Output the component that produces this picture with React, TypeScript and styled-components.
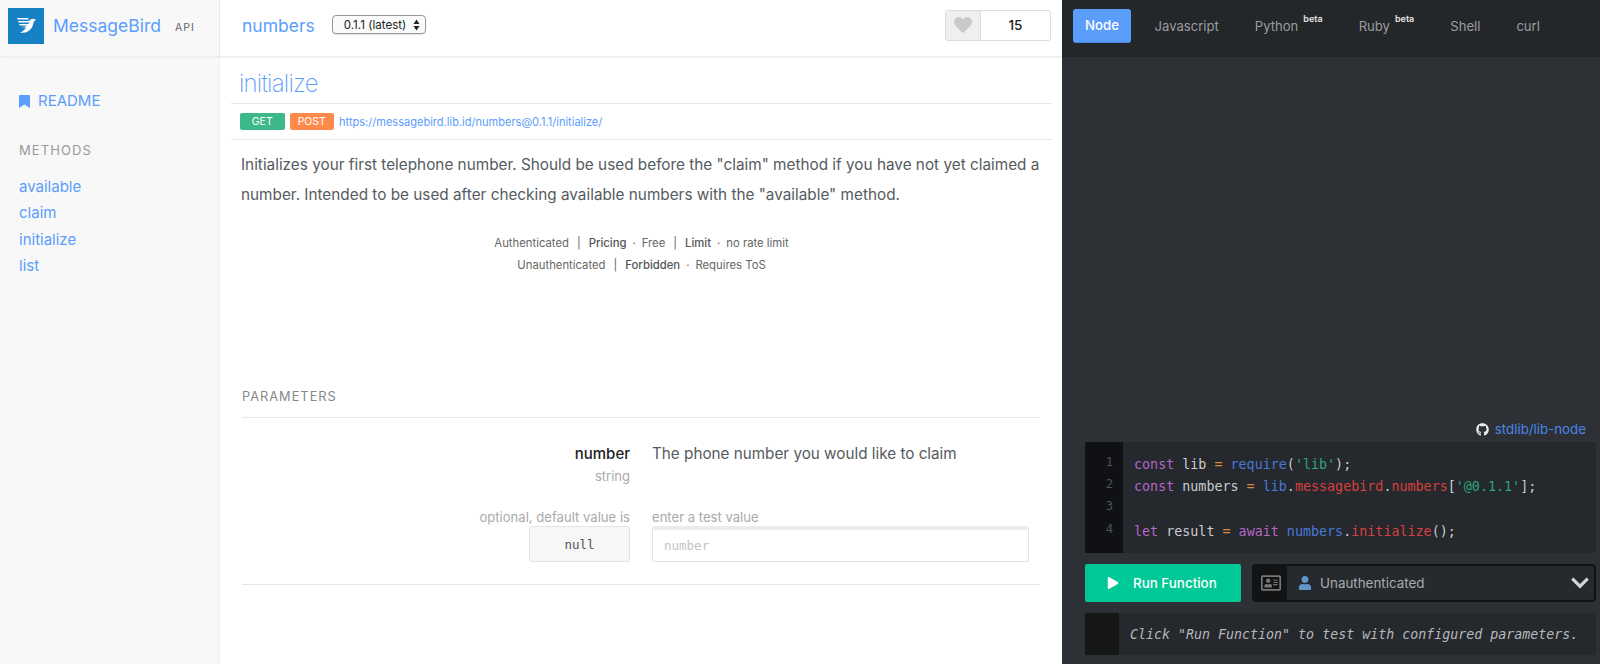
import { createGlobalStyle, styled } from "styled-components";
import { FaGithub, FaRegAddressCard, FaUser, FaChevronDown, FaHeart, FaPlay } from "react-icons/fa";

const GlobalStyle = createGlobalStyle`
html, body {
  margin: 0;
  padding: 0;
  height: 100%;
  overflow: hidden;
  background: #fff;
}
* {
  box-sizing: border-box;
}
body {
  font-family: "Inter", "Liberation Sans", sans-serif;
  color: #555b60;
}
`;

const blue = "#5b9dfb";
const mono = `"DejaVu Sans Mono", "Liberation Mono", monospace`;

const Page = styled.div`
  display: grid;
  grid-template-columns: 220px 842px 538px;
  height: 664px;
`;

const Sidebar = styled.aside`
  background: #f8f8f8;
  border-right: 1px solid #efefef;
  display: flex;
  flex-direction: column;
`;

const Brand = styled.div`
  height: 57px;
  flex: none;
  display: flex;
  align-items: center;
  padding: 0 8px 5px;
  border-bottom: 1px solid #ececec;
  box-shadow: 0 1px 2px rgba(0, 0, 0, 0.05);
`;

const LogoBox = styled.div`
  width: 36px;
  height: 36px;
  background: #1681c4;
  display: flex;
  align-items: center;
  justify-content: center;
`;

const BrandName = styled.span`
  font-size: 17.5px;
  color: ${blue};
  margin-left: 9px;
`;

const ApiTag = styled.span`
  font-size: 10.5px;
  letter-spacing: 1px;
  color: #666;
  margin-left: 14px;
  margin-top: 3px;
`;

const SideNav = styled.nav`
  padding: 34px 19px 0;
  display: flex;
  flex-direction: column;
`;

const Readme = styled.a`
  display: flex;
  align-items: center;
  gap: 8px;
  font-size: 15px;
  line-height: 20px;
  color: ${blue};
`;

const SideHeading = styled.div`
  font-size: 13px;
  letter-spacing: 1.1px;
  color: #999;
  margin-top: 29px;
  margin-bottom: 13.5px;
  line-height: 20px;
`;

const SideLink = styled.a`
  font-size: 15px;
  line-height: 26.5px;
  color: ${blue};
`;

const Main = styled.main`
  display: flex;
  flex-direction: column;
  background: #fff;
`;

const TopBar = styled.header`
  height: 57px;
  flex: none;
  display: flex;
  align-items: center;
  padding: 0 11px 5px 22px;
  border-bottom: 1px solid #ececec;
  box-shadow: 0 1px 2px rgba(0, 0, 0, 0.05);
`;

const PackageName = styled.span`
  font-size: 17.5px;
  color: ${blue};
`;

const VersionSelect = styled.div`
  margin: 0 0 2px 17px;
  width: 94px;
  height: 19px;
  border: 1px solid #999;
  border-radius: 4px;
  background: #fbfbfb;
  box-shadow: 0 1px 1px rgba(0, 0, 0, 0.1);
  font-size: 11.6px;
  color: #222;
  display: flex;
  align-items: center;
  justify-content: space-between;
  padding: 0 5px 0 11px;
`;

const LikeBox = styled.div`
  margin: 0 0 1px auto;
  width: 106px;
  height: 31px;
  border: 1px solid #dcdcdc;
  border-radius: 3px;
  display: flex;
  overflow: hidden;
`;

const LikeHeart = styled.div`
  width: 35px;
  background: #efefef;
  border-right: 1px solid #dcdcdc;
  display: flex;
  align-items: center;
  justify-content: center;
  color: #c9c9c9;
  font-size: 18px;
`;

const LikeCount = styled.div`
  flex: 1;
  display: flex;
  align-items: center;
  justify-content: center;
  font-size: 13.5px;
  font-weight: 500;
  color: #222;
`;

const Content = styled.div`
  padding: 0 10px 0 11px;
`;

const Title = styled.h1`
  margin: 0;
  height: 47px;
  font-size: 24px;
  font-weight: 200;
  line-height: 54px;
  letter-spacing: -0.8px;
  color: ${blue};
  padding-left: 8px;
  border-bottom: 1px solid #e6e6e6;
`;

const EndpointRow = styled.div`
  height: 36px;
  display: flex;
  align-items: center;
  gap: 5px;
  padding-left: 9px;
  border-bottom: 1px solid #e6e6e6;
`;

const Badge = styled.span<{ $kind: "get" | "post" }>`
  width: 44.5px;
  height: 17px;
  border-radius: 2px;
  background: ${(p) => (p.$kind === "get" ? "#3cb88a" : "#ff8a4c")};
  color: #fff;
  font-size: 10.5px;
  display: flex;
  align-items: center;
  justify-content: center;
`;

const EndpointLink = styled.a`
  font-size: 11.05px;
  color: ${blue};
`;

const Description = styled.p`
  margin: 10px 0 0;
  padding: 0 0 0 10px;
  font-size: 15.32px;
  line-height: 29.6px;
  color: #555b60;
`;

const Meta = styled.div`
  margin-top: 22.5px;
  display: flex;
  flex-direction: column;
  align-items: center;
  font-size: 11.3px;
  line-height: 22.4px;
  color: #666;
`;

const MetaSep = styled.span`
  margin: 0 8px;
`;

const MetaDot = styled.span`
  margin: 0 6px;
`;

const MetaStrong = styled.b`
  font-weight: 500;
  color: #555;
`;

const Parameters = styled.section`
  margin: 110px 12px 0 11px;
`;

const ParamHeading = styled.div`
  font-size: 12.8px;
  letter-spacing: 1px;
  color: #888;
  padding-bottom: 10px;
  line-height: 20px;
  border-bottom: 1px solid #e6e6e6;
`;

const ParamGrid = styled.div`
  display: grid;
  grid-template-columns: 388px 377px;
  column-gap: 22px;
  padding: 26px 0 22px;
  border-bottom: 1px solid #e6e6e6;
`;

const ParamLeft = styled.div`
  text-align: right;
`;

const ParamName = styled.div`
  font-size: 15px;
  font-weight: 500;
  color: #222;
  line-height: 20px;
`;

const ParamType = styled.div`
  font-size: 13px;
  color: #aaa;
  line-height: 20px;
  margin-top: 2px;
`;

const ParamDesc = styled.div`
  font-size: 15.25px;
  color: #555b60;
  line-height: 20px;
`;

const ParamHint = styled.div<{ $gap: number }>`
  font-size: 13.1px;
  color: #aaa;
  line-height: 18px;
  margin-top: ${(p) => p.$gap}px;
`;

const NullBox = styled.div`
  margin: 0 0 0 auto;
  width: 101px;
  height: 36px;
  background: #f7f7f7;
  border: 1px solid #e3e3e3;
  border-radius: 3px;
  font-family: ${mono};
  font-size: 12.5px;
  color: #555;
  display: flex;
  align-items: center;
  justify-content: center;
`;

const TestInput = styled.input`
  display: block;
  width: 100%;
  height: 36px;
  border: 1px solid #e3e3e3;
  border-top: 4px solid #ececec;
  border-radius: 3px;
  padding: 0 11px;
  font-family: ${mono};
  font-size: 12.5px;
  outline: none;
  &::placeholder {
    color: #c4c4c4;
  }
`;

const Panel = styled.aside`
  background: #2d3035;
  display: flex;
  flex-direction: column;
`;

const Tabs = styled.div`
  height: 57px;
  flex: none;
  background: #24272a;
  display: flex;
  align-items: center;
  padding: 0 0 6px 11px;
`;

const ActiveTab = styled.div`
  width: 58px;
  height: 34px;
  margin-right: 5.5px;
  border-radius: 3px;
  background: ${blue};
  border-bottom: 1px solid #4a86e8;
  color: #fff;
  font-size: 13.2px;
  font-weight: 500;
  display: flex;
  align-items: center;
  justify-content: center;
`;

const Tab = styled.div`
  padding: 0 18px;
  color: #9a9da0;
  font-size: 13.1px;
  display: flex;
  align-items: center;
`;

const Beta = styled.sup`
  color: #e4e4e4;
  font-size: 9px;
  font-weight: 600;
  margin-left: 5px;
  position: relative;
  top: -7px;
  line-height: 0;
`;

const PanelBody = styled.div`
  flex: 1;
  display: flex;
  flex-direction: column;
  justify-content: flex-end;
  padding: 0 4px 9px 23px;
`;

const RepoLink = styled.a`
  display: flex;
  align-items: center;
  justify-content: flex-end;
  gap: 6px;
  font-size: 13.3px;
  line-height: 20px;
  color: #4a86e8;
  margin-bottom: 3px;
  margin-right: 10px;
  svg {
    color: #eee;
    font-size: 13px;
  }
`;

const CodeBlock = styled.div`
  display: flex;
  height: 111px;
  background: #25282c;
  border-radius: 2px;
  overflow: hidden;
`;

const Gutter = styled.div`
  width: 38px;
  background: #0f1114;
  padding: 9px 10px 0 0;
  text-align: right;
  font-family: ${mono};
  font-size: 12.2px;
  line-height: 22.2px;
  color: #50545a;
`;

const CodeLines = styled.pre`
  margin: 0;
  padding: 12px 0 0 11px;
  font-family: ${mono};
  font-size: 13.36px;
  line-height: 22.2px;
  color: #c9ccd0;
`;

const Token = styled.span<{ $t: "kw" | "fn" | "str" | "prop" | "op" }>`
  color: ${(p) =>
    ({ kw: "#b267c9", fn: "#4a78d8", str: "#2fa57a", prop: "#d8403f", op: "#d98a3d" })[p.$t]};
`;

const Controls = styled.div`
  display: flex;
  gap: 11px;
  margin-top: 11px;
  height: 38px;
`;

const RunButton = styled.button`
  width: 156px;
  border: 0;
  border-radius: 2px;
  background: #00c896;
  color: #fff;
  font-family: inherit;
  font-size: 13.4px;
  font-weight: 500;
  display: flex;
  align-items: center;
  padding: 0 0 0 22px;
  gap: 14px;
`;

const AuthSelect = styled.div`
  flex: 1;
  display: flex;
  background: #26292d;
  border: 2px solid #111315;
  border-radius: 4px;
  overflow: hidden;
`;

const AuthIcon = styled.div`
  width: 33px;
  background: #111315;
  display: flex;
  align-items: center;
  justify-content: center;
  color: #777;
  font-size: 20px;
`;

const AuthValue = styled.div`
  flex: 1;
  display: flex;
  align-items: center;
  gap: 8px;
  padding: 0 4px 0 11px;
  font-size: 13.4px;
  color: #a9acaf;
`;

const AuthChevron = styled.span`
  margin-left: auto;
  display: flex;
  color: #d4d4d4;
  font-size: 20px;
`;

const Output = styled.div`
  display: flex;
  height: 42px;
  margin-top: 11px;
  background: #25282c;
  border-radius: 2px;
  overflow: hidden;
`;

const OutputGutter = styled.div`
  width: 34px;
  background: #151716;
`;

const OutputText = styled.div`
  flex: 1;
  display: flex;
  align-items: center;
  padding-left: 11px;
  font-family: ${mono};
  font-style: italic;
  font-size: 13.3px;
  color: #b5b8ba;
  white-space: nowrap;
`;

function BirdLogo() {
  return (
    <svg width="19" height="15" viewBox="0 0 19 15" fill="#fff">
      <path d="M0 0h11l1 1.6H.6zM1 3h11v1.6H1.6zM2.2 6H12v1.6H2.8z" />
      <path d="M12.4 2.2L15 .8 19 1.6 16.6 4c-.4 4.8-3.6 9.6-8.4 10.4L3 15c2.6-2 4.8-3.4 6.2-5.6L4.4 9.2c3.8-.2 8.2-1.6 8-7z" />
    </svg>
  );
}

function BookmarkIcon() {
  return (
    <svg width="11" height="13" viewBox="0 0 11 13" fill={blue}>
      <path d="M0 1a1 1 0 0 1 1-1h9a1 1 0 0 1 1 1v12L5.5 9.4 0 13z" />
    </svg>
  );
}

function UpDownArrows() {
  return (
    <svg width="7" height="12" viewBox="0 0 7 12" fill="#222">
      <path d="M3.5 0.5L6.5 5H.5zM3.5 11.5L.5 7h6z" />
    </svg>
  );
}

function App() {
  return (
    <>
      <GlobalStyle />
      <Page>
        <Sidebar>
          <Brand>
            <LogoBox>
              <BirdLogo />
            </LogoBox>
            <BrandName>MessageBird</BrandName>
            <ApiTag>API</ApiTag>
          </Brand>
          <SideNav>
            <Readme>
              <BookmarkIcon />
              README
            </Readme>
            <SideHeading>METHODS</SideHeading>
            <SideLink>available</SideLink>
            <SideLink>claim</SideLink>
            <SideLink>initialize</SideLink>
            <SideLink>list</SideLink>
          </SideNav>
        </Sidebar>

        <Main>
          <TopBar>
            <PackageName>numbers</PackageName>
            <VersionSelect>
              0.1.1 (latest)
              <UpDownArrows />
            </VersionSelect>
            <LikeBox>
              <LikeHeart>
                <FaHeart />
              </LikeHeart>
              <LikeCount>15</LikeCount>
            </LikeBox>
          </TopBar>
          <Content>
            <Title>initialize</Title>
            <EndpointRow>
              <Badge $kind="get">GET</Badge>
              <Badge $kind="post">POST</Badge>
              <EndpointLink>https://messagebird.lib.id/numbers@0.1.1/initialize/</EndpointLink>
            </EndpointRow>
            <Description>
              Initializes your first telephone number. Should be used before the "claim" method if you have not yet
              claimed a number. Intended to be used after checking available numbers with the "available" method.
            </Description>
            <Meta>
              <div>
                Authenticated<MetaSep>|</MetaSep>
                <MetaStrong>Pricing</MetaStrong>
                <MetaDot>·</MetaDot>Free<MetaSep>|</MetaSep>
                <MetaStrong>Limit</MetaStrong>
                <MetaDot>·</MetaDot>no rate limit
              </div>
              <div>
                Unauthenticated<MetaSep>|</MetaSep>
                <MetaStrong>Forbidden</MetaStrong>
                <MetaDot>·</MetaDot>Requires ToS
              </div>
            </Meta>
            <Parameters>
              <ParamHeading>PARAMETERS</ParamHeading>
              <ParamGrid>
                <ParamLeft>
                  <ParamName>number</ParamName>
                  <ParamType>string</ParamType>
                  <ParamHint $gap={22.5}>optional, default value is</ParamHint>
                  <NullBox>null</NullBox>
                </ParamLeft>
                <div>
                  <ParamDesc>The phone number you would like to claim</ParamDesc>
                  <ParamHint $gap={44.5}>enter a test value</ParamHint>
                  <TestInput placeholder="number" />
                </div>
              </ParamGrid>
            </Parameters>
          </Content>
        </Main>

        <Panel>
          <Tabs>
            <ActiveTab>Node</ActiveTab>
            <Tab>Javascript</Tab>
            <Tab>
              Python<Beta>beta</Beta>
            </Tab>
            <Tab>
              Ruby<Beta>beta</Beta>
            </Tab>
            <Tab>Shell</Tab>
            <Tab>curl</Tab>
          </Tabs>
          <PanelBody>
            <RepoLink>
              <FaGithub />
              stdlib/lib-node
            </RepoLink>
            <CodeBlock>
              <Gutter>
                1<br />2<br />3<br />4
              </Gutter>
              <CodeLines>
                <Token $t="kw">const</Token> lib <Token $t="op">=</Token> <Token $t="fn">require</Token>(
                <Token $t="str">'lib'</Token>);{"\n"}
                <Token $t="kw">const</Token> numbers <Token $t="op">=</Token> <Token $t="fn">lib</Token>.
                <Token $t="prop">messagebird</Token>.<Token $t="prop">numbers</Token>[<Token $t="str">'@0.1.1'</Token>];
                {"\n\n"}
                <Token $t="kw">let</Token> result <Token $t="op">=</Token> <Token $t="kw">await</Token>{" "}
                <Token $t="fn">numbers</Token>.<Token $t="prop">initialize</Token>();
              </CodeLines>
            </CodeBlock>
            <Controls>
              <RunButton>
                <FaPlay size={12} />
                Run Function
              </RunButton>
              <AuthSelect>
                <AuthIcon>
                  <FaRegAddressCard />
                </AuthIcon>
                <AuthValue>
                  <FaUser size={14} color="#5f97c9" />
                  Unauthenticated
                  <AuthChevron>
                    <FaChevronDown />
                  </AuthChevron>
                </AuthValue>
              </AuthSelect>
            </Controls>
            <Output>
              <OutputGutter />
              <OutputText>Click "Run Function" to test with configured parameters.</OutputText>
            </Output>
          </PanelBody>
        </Panel>
      </Page>
    </>
  );
}

export default App;
